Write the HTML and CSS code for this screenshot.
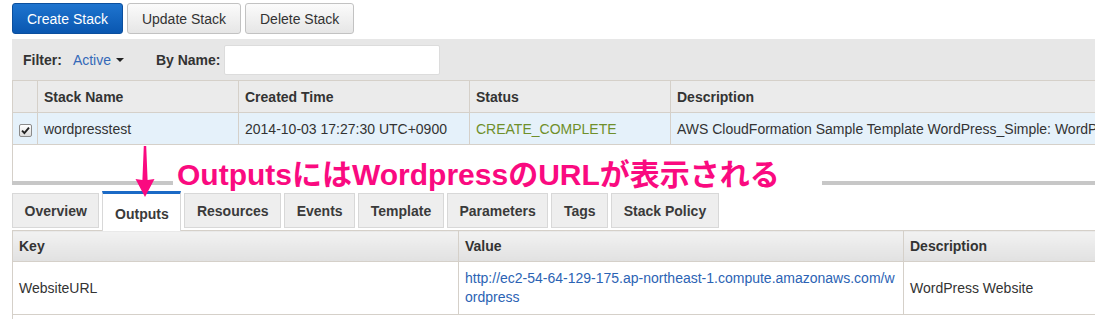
FILE: index.html
```html
<!DOCTYPE html>
<html lang="ja">
<head>
    <meta charset="UTF-8">
    <title>CloudFormation Stacks</title>
    <link rel="stylesheet" href="styles.css">
</head>
<body>
    <div class="page">
        <div class="toolbar">
            <button class="btn btn-primary">Create Stack</button>
            <button class="btn">Update Stack</button>
            <button class="btn">Delete Stack</button>
        </div>

        <div class="filter-bar">
            <span class="filter-label">Filter:</span>
            <span class="filter-value">Active <span class="caret"></span></span>
            <span class="filter-label name-label">By Name:</span>
            <input class="name-input" type="text">
        </div>

        <table class="stack-table">
            <colgroup>
                <col style="width:25px">
                <col style="width:201px">
                <col style="width:231px">
                <col style="width:201px">
                <col>
            </colgroup>
            <thead>
                <tr>
                    <th></th>
                    <th>Stack Name</th>
                    <th>Created Time</th>
                    <th>Status</th>
                    <th>Description</th>
                </tr>
            </thead>
            <tbody>
                <tr class="selected">
                    <td class="check-cell">
                        <span class="checkbox">
                            <svg width="9" height="9" viewBox="0 0 9 9"><path d="M1 4.6 L3.4 7 L8 1.6" fill="none" stroke="#222" stroke-width="1.9"/></svg>
                        </span>
                    </td>
                    <td>wordpresstest</td>
                    <td>2014-10-03 17:27:30 UTC+0900</td>
                    <td class="status-ok">CREATE_COMPLETE</td>
                    <td class="desc-cell">AWS CloudFormation Sample Template WordPress_Simple: WordP</td>
                </tr>
            </tbody>
        </table>

        <div class="detail-space"></div>
        <div class="resize-bar"></div>

        <div class="tabs">
            <div class="tab">Overview</div>
            <div class="tab active">Outputs</div>
            <div class="tab">Resources</div>
            <div class="tab">Events</div>
            <div class="tab">Template</div>
            <div class="tab">Parameters</div>
            <div class="tab">Tags</div>
            <div class="tab">Stack Policy</div>
        </div>

        <table class="outputs-table">
            <colgroup>
                <col style="width:446px">
                <col style="width:445px">
                <col>
            </colgroup>
            <thead>
                <tr>
                    <th>Key</th>
                    <th>Value</th>
                    <th>Description</th>
                </tr>
            </thead>
            <tbody>
                <tr>
                    <td>WebsiteURL</td>
                    <td class="value-cell"><a href="#">http://ec2-54-64-129-175.ap-northeast-1.compute.amazonaws.com/wordpress</a></td>
                    <td>WordPress Website</td>
                </tr>
            </tbody>
        </table>
        <div class="bottom-space"></div>

        <!-- anotación encima de la captura -->
        <div class="note">
            <svg class="note-arrow" width="24" height="52" viewBox="0 0 24 52">
                <path d="M10.8 0 L13.2 0 L14.6 34 L21.5 33 L12 51 L2.5 33 L9.4 34 Z" fill="#fa0a80"/>
            </svg>
            <div class="note-text">OutputsにはWordpressのURLが表示される</div>
        </div>
    </div>
</body>
</html>
```

FILE: styles.css
```css
/* CSS */
html, body {
    margin: 0;
    padding: 0;
    background-color: #ffffff;
    overflow: hidden;
}

body {
    font-family: "Liberation Sans", Arial, sans-serif;
    font-size: 14px;
    color: #333;
}

.page {
    position: relative;
    width: 1083px;
    padding-left: 12px;
}

/* Botones superiores */
.toolbar {
    display: flex;
    gap: 4px;
    padding-top: 3px;
}

.btn {
    height: 31px;
    padding: 0 14px;
    font-family: "Liberation Sans", Arial, sans-serif;
    font-size: 14px;
    color: #333;
    background: linear-gradient(#fbfbfb, #e6e6e6);
    border: 1px solid #c2c2c2;
    border-radius: 3px;
}

.btn-primary {
    color: #ffffff;
    background: linear-gradient(#1e74cf, #0a57b0);
    border-color: #0b4f9e;
}

/* Barra de filtro */
.filter-bar {
    display: flex;
    align-items: center;
    height: 41px;
    margin-top: 5px;
    padding-left: 11px;
    background-color: #e7e7e7;
}

.filter-label {
    font-weight: bold;
    color: #333;
}

.filter-value {
    margin-left: 11px;
    color: #3469b8;
}

.caret {
    display: inline-block;
    width: 0;
    height: 0;
    margin-left: 1px;
    vertical-align: 3px;
    border-left: 4px solid transparent;
    border-right: 4px solid transparent;
    border-top: 4px solid #222;
}

.name-label {
    margin-left: 32px;
}

.name-input {
    width: 216px;
    height: 30px;
    box-sizing: border-box;
    margin-left: 3px;
    border: 1px solid #dcdcdc;
    border-radius: 2px;
    background-color: #ffffff;
}

/* Tabla de stacks */
.stack-table,
.outputs-table {
    width: 1090px;
    table-layout: fixed;
    border-collapse: collapse;
}

.stack-table th,
.stack-table td,
.outputs-table th,
.outputs-table td {
    border: 1px solid #d5d0c9;
    padding: 0 6px;
    text-align: left;
    white-space: nowrap;
    overflow: hidden;
}

.stack-table th:last-child,
.stack-table td:last-child,
.outputs-table th:last-child,
.outputs-table td:last-child {
    border-right: none;
}

.stack-table th {
    height: 31px;
    background-color: #ebebeb;
    font-weight: bold;
}

.stack-table td {
    height: 31px;
}

.stack-table tr.selected td {
    background-color: #e5f1fa;
}

.desc-cell {
    text-overflow: clip;
}

.check-cell {
    text-align: center;
}

.checkbox {
    display: inline-flex;
    align-items: center;
    justify-content: center;
    width: 11px;
    height: 11px;
    margin-top: 2px;
    border: 1px solid #8a8a8a;
    border-radius: 2px;
    background: linear-gradient(#ffffff, #dcdcdc);
    vertical-align: middle;
}

.status-ok {
    color: #6f8f2b;
}

.detail-space {
    height: 36px;
    border-left: 1px solid #d5d0c9;
}

.resize-bar {
    height: 4px;
    background-color: #c7c7c7;
}

/* Pestañas */
.tabs {
    display: flex;
    align-items: flex-end;
    gap: 3px;
    margin-top: 6px;
    height: 39px;
}

.tab {
    height: 35px;
    line-height: 35px;
    margin-bottom: 2px;
    padding: 0 11.6px;
    box-sizing: border-box;
    border: 1px solid #d8d8d8;
    background-color: #eeeeee;
    font-weight: bold;
    color: #3a3a3a;
}

.tab.active {
    height: 40px;
    line-height: 40px;
    margin-bottom: -1px;
    border-top: 3px solid #1b6ac6;
    border-bottom: none;
    background-color: #ffffff;
    position: relative;
    z-index: 1;
}

/* Tabla de salidas */
.outputs-table th {
    height: 30px;
    background: linear-gradient(#f2f2f2, #e1e1e1);
    font-weight: bold;
}

.outputs-table td {
    height: 52px;
}

.outputs-table td.value-cell {
    white-space: normal;
    word-break: break-all;
    line-height: 19px;
}

.value-cell a {
    color: #2b63b4;
    text-decoration: none;
}

.bottom-space {
    height: 6px;
    border-left: 1px solid #d5d0c9;
}

/* Anotación rosa */
.note {
    position: absolute;
    left: 133px;
    top: 146px;
    display: flex;
    align-items: flex-start;
}

.note-arrow {
    display: block;
    position: relative;
    z-index: 3;
}

.note-text {
    margin-left: 16px;
    margin-top: 4px;
    padding: 0 42px 0 4px;
    height: 40px;
    line-height: 50px;
    background-color: #ffffff;
    color: #fa0a80;
    font-family: "Liberation Sans", "Noto Sans CJK JP", sans-serif;
    font-size: 30px;
    font-weight: bold;
    white-space: nowrap;
    position: relative;
    z-index: 2;
}
```
